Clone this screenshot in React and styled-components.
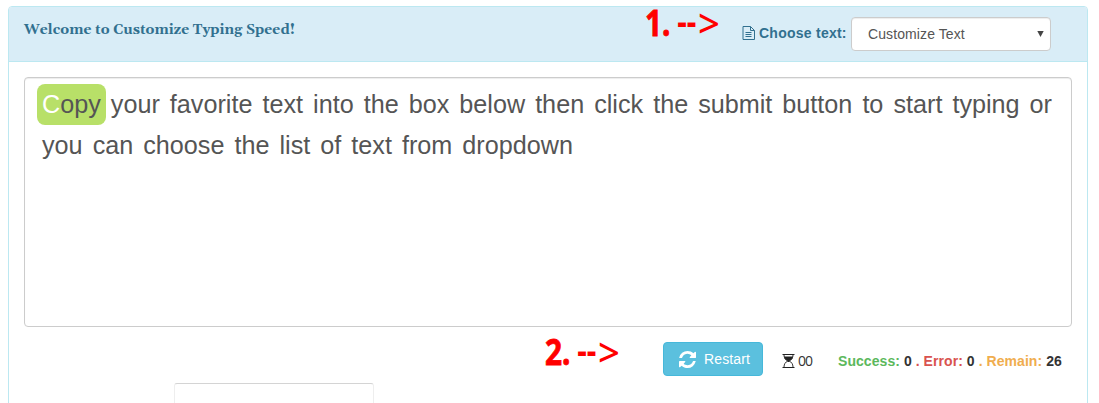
import React from 'react';
import styled, { createGlobalStyle } from 'styled-components';

const Global = createGlobalStyle`
  * { box-sizing: border-box; }
  body { margin: 0; background: #fff; font: 14px/20px "Liberation Sans", Arial, sans-serif; color: #333; }
`;
const Page = styled.div`
  position: relative;
  height: 403px;
  overflow: hidden;
  padding: 6px 11px 0 8px;
`;
const Panel = styled.section`
  height: 460px;
  border: 1px solid #bce8f1;
  border-radius: 4px;
`;
const Heading = styled.header`
  display: flex;
  justify-content: space-between;
  align-items: flex-start;
  height: 55px;
  padding: 10px 36px 0 15px;
  background: #d9edf7;
  border-bottom: 1px solid #bce8f1;
  border-radius: 3px 3px 0 0;
  color: #31708f;
`;
const Title = styled.h1`
  margin: 3px 0 0;
  font: bold 14px/20px Georgia, Gelasio, "DejaVu Serif Condensed", "DejaVu Serif", serif;
  letter-spacing: 0.04px;
  white-space: nowrap;
`;
const Chooser = styled.div`
  display: flex;
  align-items: center;
  font-weight: bold;

  > svg { margin-bottom: 2px; }
`;
const Label = styled.label`
  width: 92px;
  margin: -2px 0 0 4px;
  letter-spacing: 0.25px;
  white-space: nowrap;
`;
const SelectBox = styled.div`
  display: flex;
  align-items: center;
  justify-content: space-between;
  width: 200px;
  height: 34px;
  padding: 0 6px 0 16px;
  border: 1px solid #ccc;
  border-radius: 4px;
  background: #fff;
  box-shadow: inset 0 1px 1px rgba(0, 0, 0, .075);
  color: #555;
  font-weight: normal;
  letter-spacing: 0.1px;
`;
const Body = styled.div`padding: 15px;`;
const Passage = styled.div`
  display: flex;
  flex-wrap: wrap;
  align-content: flex-start;
  height: 250px;
  padding: 6px 12px;
  border: 1px solid #ccc;
  border-radius: 4px;
  box-shadow: inset 0 1px 1px rgba(0, 0, 0, .075);
  color: #555;
  font-size: 25.2px;
  line-height: 41px;
`;
const Word = styled.span`
  padding: 0 5px;
  border-radius: 8px;
  background: ${p => (p.$active ? '#b8e068' : 'transparent')};
`;
const Typed = styled.span`color: #fff;`;
const Status = styled.div`
  display: flex;
  align-items: center;
  justify-content: flex-end;
  height: 34px;
  margin-top: 15px;
  padding-right: 10px;
`;
const Restart = styled.button`
  display: flex;
  align-items: center;
  gap: 8px;
  width: 100px;
  height: 34px;
  padding: 0 0 0 15px;
  border: 1px solid #46b8da;
  border-radius: 4px;
  background: #5bc0de;
  color: #fff;
  font: 14px/20px "Liberation Sans", Arial, sans-serif;
  letter-spacing: 0.12px;
`;
const Timer = styled.div`
  display: flex;
  align-items: center;
  gap: 3px;
  width: 56px;
  margin: 4px 0 0 19px;
  font: 400 14px/20px "Open Sans", "Noto Sans", sans-serif;
  letter-spacing: -1px;
`;
const Score = styled.div`
  width: 224px;
  margin-top: 4px;
  font-weight: bold;
  letter-spacing: 0.06px;
  white-space: nowrap;
`;
const Tone = styled.span`color: ${p => p.$color};`;
const Entry = styled.div`
  width: 200px;
  height: 60px;
  margin: 7px 0 0 150px;
  border: 1px solid #eee;
  border-top-color: #d4d4d4;
  border-radius: 3px;
`;
const Step = styled.div`
  position: absolute;
  left: ${p => p.$x}px;
  top: ${p => p.$y}px;
  display: flex;
  align-items: center;
  height: 46px;
  color: #f00;
  font: bold 36px/46px "Noto Sans", "Open Sans", sans-serif;
  white-space: pre;
  transform: scaleX(.83);
  transform-origin: 0 50%;
`;
const Count = styled.span`
  -webkit-text-stroke: 0.8px #f00;
`;
const Dashes = styled.span`
  margin: -4px 0 0 8px;
`;
const Chevron = styled.span`
  margin-left: 2px;
  font-size: 39px;
  font-weight: 500;
  transform: scaleX(1.18);
  transform-origin: 0 50%;
`;

const FileIcon = () => (
  <svg width="13" height="14" viewBox="0 0 13 14" fill="none" stroke="currentColor">
    <path d="M1 .5h7.500l4 4v9H1zM8.500 .5v4h4M3.500 6.500h6M3.500 8.500h6M3.500 10.500h6" />
  </svg>
);
const RefreshIcon = () => (
  <svg width="17" height="17" viewBox="0 0 1536 1536" fill="currentColor">
    <path d="M1511 928q0 5-1 7-64 268-268 434.5T764 1536q-146 0-282.5-55T238 1324l-129 129q-19 19-45 19t-45-19-19-45V960q0-26 19-45t45-19h448q26 0 45 19t19 45-19 45l-137 137q71 66 161 102t187 36q134 0 250-65t186-179q11-17 53-117 8-23 30-23h192q13 0 22.5 9.5t9.5 22.5zm25-800v448q0 26-19 45t-45 19h-448q-26 0-45-19t-19-45 19-45l138-138Q969 256 768 256q-134 0-250 65T332 500q-11 17-53 117-8 23-30 23H50q-13 0-22.5-9.5T18 608v-7q65-268 270-434.5T768 0q146 0 284 55.5T1297 212l130-129q19-19 45-19t45 19 19 45z" />
  </svg>
);
const HourglassIcon = () => (
  <svg width="13" height="14" viewBox="0 0 13 14">
    <path d="M.5 0h12v1H.5zM.5 13h12v1H.5z" fill="#222" />
    <path d="M2 2.500h9c0 2-1.500 3.300-3.500 4.500v1h-2V7C3.500 5.800 2 4.500 2 2.500z" fill="#222" />
    <path d="M2 1c0 3 1.500 4.800 3.700 6C3.500 8.200 2 10 2 13M11 1c0 3-1.500 4.800-3.700 6C9.500 8.200 11 10 11 13" fill="none" stroke="#333" />
  </svg>
);
const Caret = () => (
  <svg width="7" height="6" viewBox="0 0 7 6"><path d="M.3 0h6.400L3.500 6z" fill="#444" /></svg>
);

const words = 'your favorite text into the box below then click the submit button to start typing or you can choose the list of text from dropdown'.split(' ');

const Callout = ({ n, x, y }) => (
  <Step $x={x} $y={y}>
    <Count>{n}.</Count>
    <Dashes>--</Dashes>
    <Chevron>&gt;</Chevron>
  </Step>
);

export default function App() {
  return (
    <Page>
      <Global />
      <Panel>
        <Heading>
          <Title>Welcome to Customize Typing Speed!</Title>
          <Chooser>
            <FileIcon />
            <Label>Choose text:</Label>
            <SelectBox>Customize Text<Caret /></SelectBox>
          </Chooser>
        </Heading>
        <Body>
          <Passage>
            <Word $active><Typed>C</Typed>opy</Word>
            {words.map((w, i) => <Word key={i}>{w}</Word>)}
          </Passage>
          <Status>
            <Restart><RefreshIcon />Restart</Restart>
            <Timer><HourglassIcon />00</Timer>
            <Score>
              <Tone $color="#5cb85c">Success:</Tone> 0 <Tone $color="#d9534f">. Error:</Tone> 0 <Tone $color="#f0ad4e">. Remain:</Tone> 26
            </Score>
          </Status>
          <Entry />
        </Body>
      </Panel>
      <Callout n="1" x={645} y={0} />
      <Callout n="2" x={545} y={329} />
    </Page>
  );
}
